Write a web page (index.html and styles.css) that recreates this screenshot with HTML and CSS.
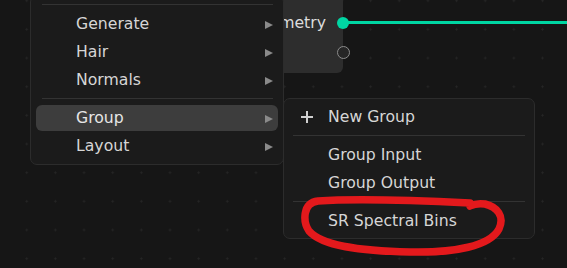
FILE: index.html
```html
<!DOCTYPE html>
<html>
<head>
<meta charset="utf-8">
<link rel="stylesheet" href="styles.css">
</head>
<body>
<div class="canvas">
  <div class="node">
    <div class="node-row"><span class="node-label">Geometry</span><span class="socket socket-geo"></span></div>
    <div class="node-row"><span class="socket socket-empty"></span></div>
  </div>
  <div class="link"></div>

  <div class="menu menu-main">
    <div class="sep"></div>
    <div class="item"><span class="label">Generate</span><span class="arrow"></span></div>
    <div class="item"><span class="label">Hair</span><span class="arrow"></span></div>
    <div class="item"><span class="label">Normals</span><span class="arrow"></span></div>
    <div class="sep"></div>
    <div class="item active"><span class="label">Group</span><span class="arrow"></span></div>
    <div class="item"><span class="label">Layout</span><span class="arrow"></span></div>
  </div>

  <div class="menu menu-sub">
    <div class="item"><span class="icon-plus"></span><span class="label">New Group</span></div>
    <div class="sep"></div>
    <div class="item"><span class="label">Group Input</span></div>
    <div class="item"><span class="label">Group Output</span></div>
    <div class="sep"></div>
    <div class="item"><span class="label">SR Spectral Bins</span></div>
  </div>

  <svg class="annotation" width="567" height="268" viewBox="0 0 567 268">
    <path d="M470 203 C430 201 360 198 318 201 C302 203 303 222 309 231 C322 246 360 251 410 252 C455 253 490 246 499 229 C505 216 497 207 485 204 C478 203 474 204 470 206" fill="none" stroke="#e3191c" stroke-width="7.5" stroke-linecap="round" stroke-linejoin="round"/>
  </svg>
</div>
</body>
</html>
```
FILE: styles.css
```css
html, body {
  margin: 0;
  padding: 0;
}
body {
  width: 567px;
  height: 268px;
  overflow: hidden;
  background-color: #161616;
  font-family: "DejaVu Sans", sans-serif;
  font-size: 15.7px;
  color: #d6d6d6;
}
.canvas {
  position: relative;
  width: 567px;
  height: 268px;
  background-image: radial-gradient(circle, #262626 0.9px, transparent 1.2px);
  background-size: 28.67px 28.67px;
  background-position: 12.4px -13.6px;
}
.node {
  position: absolute;
  left: 160px;
  top: -40px;
  width: 183px;
  height: 113px;
  background: #2d2d2d;
  border-radius: 0 0 6px 6px;
  display: flex;
  flex-direction: column;
  padding-top: 48px;
  box-sizing: border-box;
}
.node-row {
  height: 30px;
  display: flex;
  align-items: center;
  justify-content: flex-end;
  position: relative;
}
.node-label {
  margin-right: 17px;
  padding-bottom: 2px;
  color: #dcdcdc;
}
.socket {
  position: absolute;
  border-radius: 50%;
  box-sizing: border-box;
}
.socket-geo {
  right: -6px;
  width: 12px;
  height: 12px;
  background: #00d6a3;
  top: 9px;
}
.socket-empty {
  right: -6.5px;
  width: 13px;
  height: 13px;
  border: 1px solid #8c8c8c;
  background: #262626;
  top: 7.5px;
}
.link {
  position: absolute;
  left: 346px;
  top: 20.5px;
  width: 221px;
  height: 3px;
  background: #00d6a3;
}
.menu {
  position: absolute;
  background: #1b1b1b;
  border: 1px solid #2c2c2c;
  border-radius: 7px;
  box-sizing: border-box;
  display: flex;
  flex-direction: column;
}
.menu-main {
  left: 30px;
  top: -5px;
  width: 254px;
  padding: 4px 0 4px;
}
.menu-sub {
  left: 283px;
  top: 98px;
  width: 252px;
  padding: 4px 0 3px;
}
.item {
  height: 28px;
  display: flex;
  align-items: center;
  margin: 0 5px;
  padding: 0 0 0 40px;
  border-radius: 6px;
  position: relative;
}
.menu-sub .item {
  padding-left: 39px;
}
.item.active {
  background: #3d3d3d;
  height: 26px;
  margin-top: 1px;
  margin-bottom: 1px;
  color: #e6e6e6;
}
.label {
  flex: 1;
  white-space: nowrap;
  padding-bottom: 2px;
}
.arrow {
  width: 0;
  height: 0;
  border-top: 4.5px solid transparent;
  border-bottom: 4.5px solid transparent;
  border-left: 8px solid #8a8a8a;
  margin-right: 5px;
  margin-top: 1px;
}
.sep {
  height: 1px;
  background: #333333;
  margin: 4px 10px 5px 11px;
}
.menu-sub .sep {
  margin: 4px 9px 5px 9px;
}
.icon-plus {
  position: absolute;
  left: 12px;
  top: 8px;
  width: 12px;
  height: 12px;
  background:
    linear-gradient(#d0d0d0, #d0d0d0) center / 12px 2px no-repeat,
    linear-gradient(#d0d0d0, #d0d0d0) center / 2px 12px no-repeat;
}
.annotation {
  position: absolute;
  left: 0;
  top: 0;
  pointer-events: none;
}
```
